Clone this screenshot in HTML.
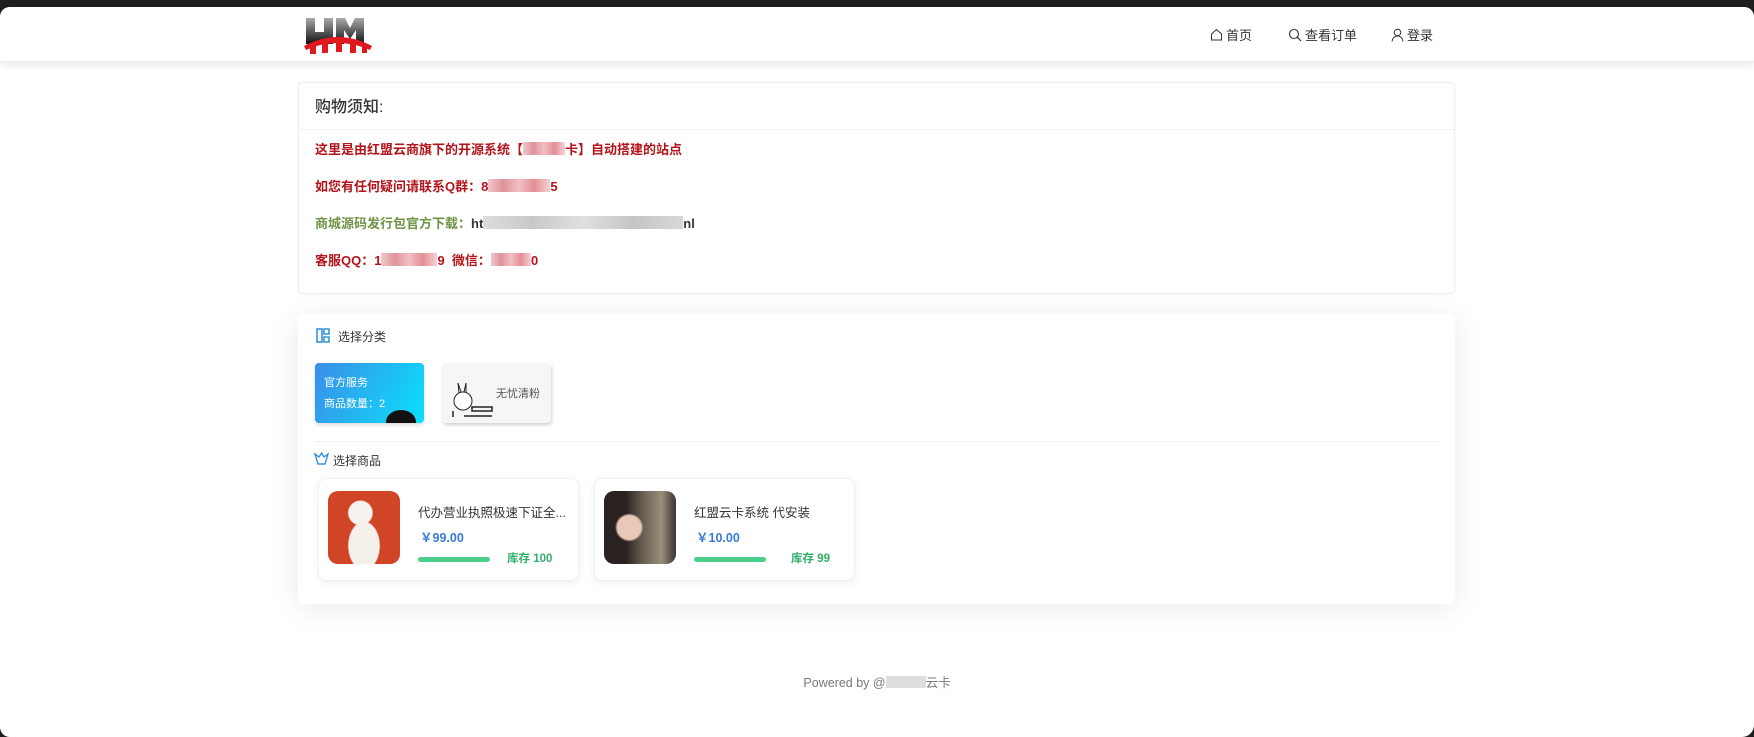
<!DOCTYPE html>
<html><head><meta charset="utf-8">
<style>
*{margin:0;padding:0;box-sizing:border-box}
html,body{width:1754px;height:737px;overflow:hidden;background:#1e1e1e;font-family:"Liberation Sans","Noto Sans CJK SC",sans-serif}
#win{position:absolute;left:0;top:7px;width:1754px;height:730px;background:#fff;border-radius:10px 10px 12px 10px;overflow:hidden}
#hdr{position:absolute;left:0;top:0;width:100%;height:55px;background:#fff;box-shadow:0 3px 8px rgba(0,0,0,.09);border-bottom:1px solid #eee}
.nav{position:absolute;top:18px;font-size:13px;color:#333;display:flex;align-items:center;gap:3px}
.card{position:absolute;background:#fff;border-radius:5px}
.c1{left:298px;top:75px;width:1157px;height:212px;border:1px solid #eee;box-shadow:0 1px 3px rgba(0,0,0,.05)}
.c2{left:298px;top:307px;width:1157px;height:290px;box-shadow:0 4px 30px rgba(0,0,0,.09)}
.ln{position:absolute;left:16px;font-size:13px;font-weight:bold;color:#b3141b;white-space:nowrap}
.bl{display:inline-block;height:13px;vertical-align:-1px;background:linear-gradient(90deg,#f0c8cc,#e0929a,#f0c0c4,#e58e96,#f4d4d6)}
.gb{background:linear-gradient(90deg,#ddd,#c8c8c8,#e0e0e0,#c5c5c5,#d8d8d8)}
.pc{position:absolute;top:164px;width:261px;height:103px;border:1px solid #eef0f3;border-radius:8px;box-shadow:0 2px 8px rgba(0,0,0,.07);background:#fff}
.pimg{position:absolute;left:9px;top:12px;width:72px;height:73px;border-radius:10px}
.pt{position:absolute;left:99px;top:23px;font-size:12.5px;color:#333}
.pp{position:absolute;left:101px;top:48px;font-size:12.5px;color:#3a7bd5;font-weight:bold}
.bar{position:absolute;left:99px;top:78px;width:72px;height:5px;border-radius:3px;background:#4ccf8a}
.st{position:absolute;top:71px;font-size:11.5px;color:#2fae6a;font-weight:bold}
</style></head><body>
<div id="win">
<div id="hdr">
 <svg style="position:absolute;left:304px;top:7px" width="68" height="42" viewBox="0 0 68 42">
  <defs><linearGradient id="g" x1="0" y1="0" x2="0" y2="1"><stop offset="0" stop-color="#aaa"/><stop offset="1" stop-color="#111"/></linearGradient></defs>
  <path d="M2 4h9v14h9V4h9v26H2z M32 4h9l5 10 5-10h9v26h-8V16l-6 9-6-9v14h-8z" fill="url(#g)"/>
  <path d="M0 32 Q34 14 68 32 L66 36 Q34 22 2 36z" fill="#e0191f"/>
  <path d="M6 30h6v10H6zM18 27h6v12h-6zM32 25h6v13h-6zM46 27h6v12h-6zM58 30h5v9h-5z" fill="#e0191f"/>
 </svg>
 <div class="nav" style="left:1210px"><svg width="13" height="13" viewBox="0 0 13 13"><path d="M1.5 6L6.5 1.5 11.5 6V12H1.5z" fill="none" stroke="#333" stroke-width="1"/></svg>首页</div>
 <div class="nav" style="left:1288px"><svg width="14" height="14" viewBox="0 0 14 14"><circle cx="6" cy="6" r="4.5" fill="none" stroke="#333" stroke-width="1.1"/><path d="M9.3 9.3L13 13" stroke="#333" stroke-width="1.2"/></svg>查看订单</div>
 <div class="nav" style="left:1391px"><svg width="13" height="14" viewBox="0 0 13 14"><circle cx="6.5" cy="4.5" r="3.3" fill="none" stroke="#333" stroke-width="1"/><path d="M1 13.5Q2 8 6.5 8T12 13.5" fill="none" stroke="#333" stroke-width="1"/></svg>登录</div>
</div>

<div class="card c1">
 <div style="position:absolute;left:16px;top:10px;font-size:16px;color:#333;font-weight:500">购物须知:</div>
 <div style="position:absolute;left:0;top:46px;width:100%;border-top:1px solid #f2f2f2"></div>
 <div class="ln" style="top:56px">这里是由红盟云商旗下的开源系统【<span class="bl" style="width:42px"></span>卡】自动搭建的站点</div>
 <div class="ln" style="top:93px">如您有任何疑问请联系Q群：8<span class="bl" style="width:62px"></span>5</div>
 <div class="ln" style="top:130px;color:#6e9446">商城源码发行包官方下载：<span style="color:#333">ht<span class="bl gb" style="width:200px"></span>nl</span></div>
 <div class="ln" style="top:167px">客服QQ：1<span class="bl" style="width:56px"></span>9&nbsp; 微信：<span class="bl" style="width:40px"></span>0</div>
</div>

<div class="card c2">
 <svg style="position:absolute;left:18px;top:14px" width="14" height="15" viewBox="0 0 14 15"><rect x="1" y="1" width="5" height="13" fill="none" stroke="#3a8ee6" stroke-width="1.6"/><path d="M8 1h5v5H8zM8 9h5v5H8z" fill="none" stroke="#39c" stroke-width="1.6"/></svg>
 <div style="position:absolute;left:40px;top:14px;font-size:12px;color:#333">选择分类</div>
 <div style="position:absolute;left:17px;top:49px;width:109px;height:60px;border-radius:4px;background:linear-gradient(120deg,#3b8ee8,#0ae0fb);box-shadow:0 2px 4px rgba(0,0,0,.15);overflow:hidden;color:#fff;font-size:11px">
  <div style="position:absolute;left:9px;top:11px">官方服务</div>
  <div style="position:absolute;left:9px;top:32px">商品数量：2</div>
  <div style="position:absolute;left:71px;top:47px;width:30px;height:24px;border-radius:50% 50% 0 0;background:#111"></div>
 </div>
 <div style="position:absolute;left:144px;top:49px;width:109px;height:60px;border-radius:4px;background:#f6f6f6;box-shadow:1px 2px 3px rgba(0,0,0,.18)">
  <svg style="position:absolute;left:6px;top:16px" width="46" height="40" viewBox="0 0 46 40"><circle cx="15" cy="22" r="9" fill="#fff" stroke="#222"/><path d="M11 14l-1-10 3 9M16 13l2-9 0 10" fill="none" stroke="#222"/><path d="M5 38v-6M24 28h20v4H24zM16 37h28" stroke="#222" fill="none" stroke-width="1.5"/></svg>
  <div style="position:absolute;left:54px;top:22px;font-size:11px;color:#555">无忧清粉</div>
 </div>
 <div style="position:absolute;left:17px;top:127px;width:1123px;border-top:1px solid #f0f0f0"></div>
 <svg style="position:absolute;left:16px;top:138px" width="15" height="13" viewBox="0 0 15 13"><path d="M1 2l3 10h7l3-10-4 3-2.5-4L5 5z" fill="none" stroke="#3a8ee6" stroke-width="1.4"/></svg>
 <div style="position:absolute;left:35px;top:138px;font-size:12px;color:#333">选择商品</div>
 <div class="pc" style="left:20px">
  <div class="pimg" style="background:radial-gradient(ellipse at 50% 75%,#f4f0ea 30%,transparent 32%),radial-gradient(circle at 45% 30%,#f6f2ee 18%,transparent 20%),#d04526"></div>
  <div class="pt">代办营业执照极速下证全...</div>
  <div class="pp">￥99.00</div>
  <div class="bar"></div>
  <div class="st" style="left:188px">库存 100</div>
 </div>
 <div class="pc" style="left:296px">
  <div class="pimg" style="background:radial-gradient(circle at 35% 50%,#e9c8b8 20%,transparent 24%),linear-gradient(90deg,#2a2220 30%,#6a6055 55%,#9a8d7a 80%,#3a3430)"></div>
  <div class="pt">红盟云卡系统 代安装</div>
  <div class="pp">￥10.00</div>
  <div class="bar"></div>
  <div class="st" style="left:196px">库存 99</div>
 </div>
</div>

<div style="position:absolute;left:0;width:100%;top:665px;text-align:center;font-size:12.5px;color:#777">Powered by @<span style="display:inline-block;width:40px;height:12px;background:#ddd;vertical-align:-1px"></span>云卡</div>
</div>
</body></html>
